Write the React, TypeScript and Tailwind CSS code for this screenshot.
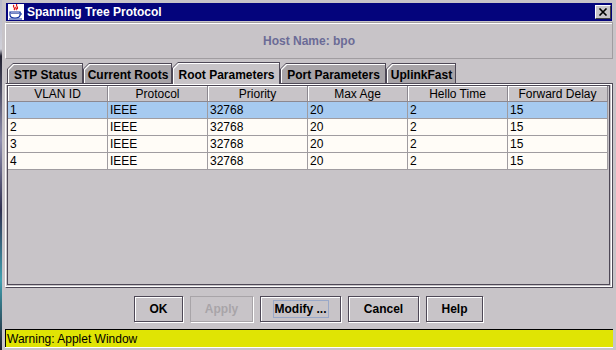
import React from 'react';

const tabs = [
  { label: 'STP Status', width: 'w-[76px]', active: false },
  { label: 'Current Roots', width: 'w-[89px]', active: false },
  { label: 'Root Parameters', width: 'w-[108px]', active: true },
  { label: 'Port Parameters', width: 'w-[106px]', active: false },
  { label: 'UplinkFast', width: 'w-[70px]', active: false },
];

const columns = ['VLAN ID', 'Protocol', 'Priority', 'Max Age', 'Hello Time', 'Forward Delay'];

const rows = [
  ['1', 'IEEE', '32768', '20', '2', '15'],
  ['2', 'IEEE', '32768', '20', '2', '15'],
  ['3', 'IEEE', '32768', '20', '2', '15'],
  ['4', 'IEEE', '32768', '20', '2', '15'],
];

const buttons = [
  { label: 'OK', width: 'w-[49px]', disabled: false, focused: false },
  { label: 'Apply', width: 'w-[63px]', disabled: true, focused: false },
  { label: 'Modify ...', width: 'w-[81px]', disabled: false, focused: true },
  { label: 'Cancel', width: 'w-[71px]', disabled: false, focused: false },
  { label: 'Help', width: 'w-[57px]', disabled: false, focused: false },
];

function JavaIcon() {
  return (
    <svg width="16" height="16" viewBox="0 0 16 16">
      <rect x="0" y="0" width="16" height="16" fill="#ffffff" />
      <path d="M6 1 C4 3 8 4 6 6 M9 0 C7 2 11 3 9 5 M8 3 C7 4 9 5 8 6" stroke="#e01010" strokeWidth="1.2" fill="none" />
      <path d="M2 8 H12 V11 C12 13 10 14 7 14 C4 14 2 13 2 11 Z" fill="none" stroke="#1030a0" strokeWidth="1.2" />
      <path d="M12 9 C14 9 14 11 12 11" fill="none" stroke="#1030a0" strokeWidth="1" />
      <path d="M1 15 H14" stroke="#1030a0" strokeWidth="1" />
      <path d="M3 9.5 H11" stroke="#7080c0" strokeWidth="1" />
    </svg>
  );
}

function Tab({ label, width, active }: { label: string; width: string; active: boolean }) {
  return (
    <div
      className={`${width} ${active ? 'relative z-10 -mb-px h-[22px]' : 'h-[20px]'} bg-[#4e4856] pl-px pr-px pt-px [clip-path:polygon(6px_0,100%_0,100%_100%,0_100%,0_6px)]`}
    >
      <div className="h-full bg-white pl-px pt-px [clip-path:polygon(5px_0,100%_0,100%_100%,0_100%,0_5px)]">
        <div
          className={`flex h-full items-center justify-center pt-px text-[12px] font-bold text-black ${active ? 'bg-[#c8c4c8]' : 'bg-[#a8a4a8]'} [clip-path:polygon(5px_0,100%_0,100%_100%,0_100%,0_5px)]`}
        >
          {label}
        </div>
      </div>
    </div>
  );
}

export default function App() {
  return (
    <div className="flex h-[350px] w-[616px] overflow-hidden bg-[#c8c4c8] font-['Liberation_Sans',Arial,sans-serif] text-black">
      {/* desktop showing behind the left edge */}
      <div className="w-[2px] bg-[linear-gradient(to_bottom,#b8b8c8_0%,#d0d0d8_14%,#202030_16%,#9090b0_40%,#303050_60%,#40a0b0_80%,#202030_100%)]" />

      <div className="flex flex-1 flex-col px-[3px] pt-[3px]">
        {/* title bar */}
        <div className="mx-px flex h-[18px] items-center bg-[#04047c] pl-[2px] pr-px">
          <JavaIcon />
          <span className="ml-[3px] text-[12px] font-bold leading-none text-white">Spanning Tree Protocol</span>
          <div className="ml-auto flex h-[14px] w-[16px] items-center justify-center border-t border-l border-t-white border-l-white border-r border-b border-r-[#404040] border-b-[#404040] bg-[#c8c4c8]">
            <svg width="10" height="8" viewBox="0 0 10 8">
              <path d="M1.5 0.5 L8.5 7.5 M8.5 0.5 L1.5 7.5" stroke="#000" strokeWidth="1.6" />
            </svg>
          </div>
        </div>

        {/* host name panel */}
        <div className="mt-px flex h-[37px] items-center justify-center border border-t-[#a09ca0] border-l-white border-b-[#a09ca0] border-r-[#a09ca0] shadow-[inset_0_1px_0_white]">
          <span className="text-[12px] font-bold text-[#6b6b96]">Host Name: bpo</span>
        </div>

        {/* tabs */}
        <div className="mt-[3px] flex h-[21px] items-end pl-[2px]">
          {tabs.map((t) => (
            <Tab key={t.label} label={t.label} width={t.width} active={t.active} />
          ))}
        </div>

        {/* tab content */}
        <div className="flex h-[205px] flex-col border border-t-[#4e4856] border-l-white border-r-[#4e4856] border-b-[#4e4856] pl-px pr-[2px] pt-px pb-[2px] shadow-[inset_0_1px_0_white,inset_-1px_0_0_white,inset_0_-1px_0_white]">
          <div className="flex-1 border border-[#4e4856] bg-[#c8c4c8]">
            <div className="grid w-[600px] grid-cols-6">
              {columns.map((c) => (
                <div
                  key={c}
                  className="flex h-[16px] items-center justify-center border-r border-b border-[#8c8890] bg-[#c8c4c8] text-[12px] leading-none shadow-[inset_1px_1px_0_white]"
                >
                  {c}
                </div>
              ))}
              {rows.map((r, i) =>
                r.map((v, j) => (
                  <div
                    key={`${i}-${j}`}
                    className={`flex h-[17px] items-center border-r border-b border-[#a09ca0] pl-[2px] text-[12px] leading-none ${i === 0 ? 'bg-[#a6caf0]' : 'bg-[#fffcf7]'}`}
                  >
                    {v}
                  </div>
                )),
              )}
            </div>
          </div>
        </div>

        {/* buttons */}
        <div className="flex h-[41px] items-center justify-center gap-[7px] pr-px">
          {buttons.map((b) => (
            <div
              key={b.label}
              className={`${b.width} flex h-[26px] items-center justify-center border text-[12px] font-bold ${
                b.disabled
                  ? 'border-[#a8a4a8] text-[#a8a4a8] shadow-[1px_1px_0_white]'
                  : 'border-[#4e4856] shadow-[inset_1px_1px_0_white,1px_1px_0_white]'
              }`}
            >
              {b.focused ? (
                <span className="flex h-[18px] items-center border border-[#99a8c8] px-px">{b.label}</span>
              ) : (
                b.label
              )}
            </div>
          ))}
        </div>

        {/* applet warning */}
        <div className="flex h-[18px] items-center border-t border-l border-black bg-[#e0e404] pl-px text-[12px] leading-none">
          Warning: Applet Window
        </div>
        <div className="h-[3px] border-t border-white" />
      </div>
    </div>
  );
}
